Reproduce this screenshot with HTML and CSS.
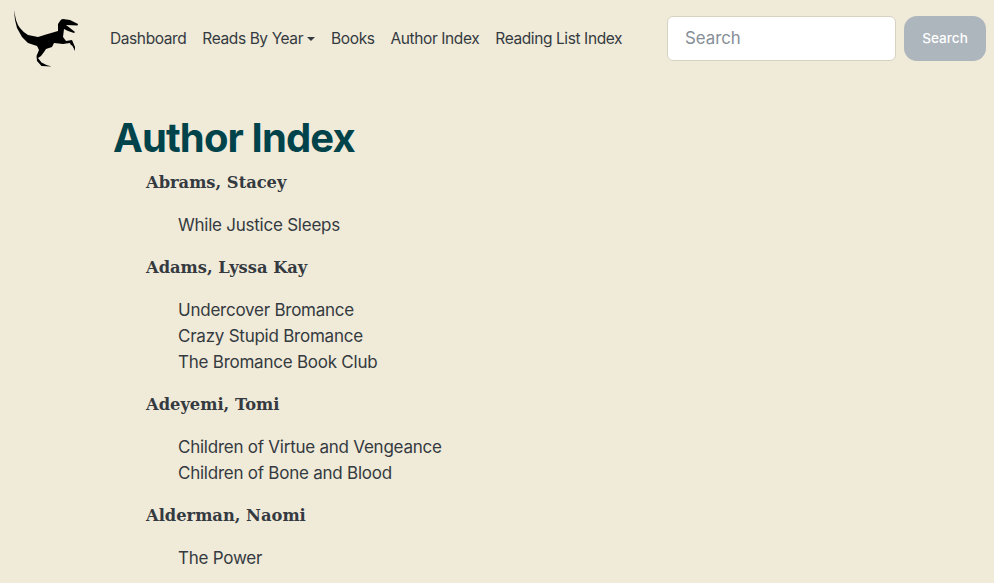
FILE: index.html
```html
<!DOCTYPE html>
<html lang="en">
<head>
  <meta charset="UTF-8">
  <meta name="viewport" content="width=device-width, initial-scale=1.0">
  <title>Author Index</title>
  <link rel="stylesheet" href="styles.css">
</head>
<body>

  <nav class="navbar">
    <a class="brand" href="#">
      <svg class="logo" viewBox="0 0 72 60" aria-label="Logo">
        <path d="M6 2 L8 12 Q9.500 17 12 20 Q15 24 20 27 L30 29 L38 26.500 L50 23 L50 16 L52 13 Q53 11 55 11 L62 12 L70 16 L69.500 17.500 L58 17 L62 20 L67 24 L66 25 L60 23 L56 21 L55 29 L58 33 L64 32 L67 39 L67 43 L64.500 38 L62.500 36.500 L62 35 L55 36 L46 35 L44 39 L38 41 L36 44 L33 48 L30 50 L33.500 54.500 L38.500 57 L43.500 58.500 L33.500 58 L29 53 L28.500 48 L31 42 L29 38 L20 35 L14 29 L9 20 L7 12 Z"/>
      </svg>
    </a>
    <ul class="nav-links">
      <li><a href="#">Dashboard</a></li>
      <li><a href="#" class="dropdown-toggle">Reads By Year</a></li>
      <li><a href="#">Books</a></li>
      <li><a href="#">Author Index</a></li>
      <li><a href="#">Reading List Index</a></li>
    </ul>
    <form class="search-form">
      <input type="search" class="search-input" placeholder="Search">
      <button type="submit" class="search-btn">Search</button>
    </form>
  </nav>

  <main class="container">
    <h1>Author Index</h1>
    <dl class="authors">
      <dt>Abrams, Stacey</dt>
      <dd><a href="#">While Justice Sleeps</a></dd>

      <dt>Adams, Lyssa Kay</dt>
      <dd>
        <a href="#">Undercover Bromance</a>
        <a href="#">Crazy Stupid Bromance</a>
        <a href="#">The Bromance Book Club</a>
      </dd>

      <dt>Adeyemi, Tomi</dt>
      <dd>
        <a href="#">Children of Virtue and Vengeance</a>
        <a href="#">Children of Bone and Blood</a>
      </dd>

      <dt>Alderman, Naomi</dt>
      <dd><a href="#">The Power</a></dd>
    </dl>
  </main>

</body>
</html>
```

FILE: styles.css
```css
html, body {
  height: 100%;
}
body {
  margin: 0;
  font-family: Inter, "Liberation Sans", sans-serif;
  font-size: 17px;
  letter-spacing: -0.24px;
  line-height: 26px;
  color: #343a40;
  background-color: #f0ead9;
  overflow: hidden;
}
a {
  color: inherit;
  text-decoration: none;
}
.navbar {
  display: flex;
  align-items: center;
  padding: 8px;
}
.brand {
  display: flex;
  margin-right: 22px;
}
.logo {
  width: 72px;
  height: 60px;
}
.nav-links {
  display: flex;
  list-style: none;
  margin: 0;
  padding: 2px 0 0;
  flex: 1;
  font-size: 15.5px;
  letter-spacing: -0.4px;
  white-space: nowrap;
}
.nav-links a {
  display: block;
  padding: 8px;
}
.dropdown-toggle::after {
  content: "";
  display: inline-block;
  margin-left: 4px;
  vertical-align: 3px;
  border-top: 4px solid;
  border-left: 4px solid transparent;
  border-right: 4px solid transparent;
}
.search-form {
  display: flex;
  gap: 8px;
}
.search-input {
  width: 229px;
  height: 45px;
  box-sizing: border-box;
  padding: 8px 17px;
  font-family: inherit;
  font-size: 16.8px;
  color: #343a40;
  background-color: #fff;
  border: 1px solid #d9d2c2;
  border-radius: 6px;
  outline: none;
}
.search-input::placeholder {
  color: #868e96;
  opacity: 1;
}
.search-btn {
  width: 82px;
  height: 45px;
  font-family: inherit;
  font-size: 13.6px;
  font-weight: 500;
  color: #fff;
  background-color: #adb5bd;
  border: none;
  border-radius: 13px;
}
.container {
  padding: 0 113px;
}
h1 {
  margin: 0 0 7px;
  padding-top: 38px;
  font-size: 40px;
  letter-spacing: -0.88px;
  line-height: 48px;
  font-weight: 700;
  color: #00434a;
}
.authors {
  margin: 0;
  padding-left: 33px;
}
.authors dt {
  padding-top: 1px;
  font-family: "DejaVu Serif", Georgia, serif;
  font-size: 16.3px;
  letter-spacing: 0;
  line-height: 26px;
  font-weight: 700;
}
.authors dd {
  margin: 0 0 16px 32px;
  padding-top: 16px;
}
.authors dd a {
  display: block;
}
```
